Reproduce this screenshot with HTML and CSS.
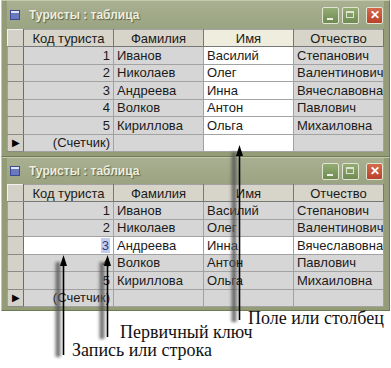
FILE: index.html
```html
<!DOCTYPE html>
<html lang="ru">
<head>
    <meta charset="UTF-8">
    <title>Туристы : таблица</title>
    <link rel="stylesheet" href="styles.css">
</head>
<body>
<div class="page">
    <div class="win win-top">
        <div class="titlebar">
            <span class="ticon"></span>
            <span class="ttext">Туристы : таблица</span>
            <span class="btns">
                <span class="btn btn-min"></span>
                <span class="btn btn-max"></span>
                <span class="btn btn-close">&#x2715;</span>
            </span>
        </div>
        <table class="grid sel-col">
            <tr><th class="rs"></th><th>Код туриста</th><th>Фамилия</th><th class="hl">Имя</th><th>Отчество</th></tr>
            <tr><td class="rs"></td><td class="num">1</td><td>Иванов</td><td class="w">Василий</td><td>Степанович</td></tr>
            <tr><td class="rs"></td><td class="num">2</td><td>Николаев</td><td class="w">Олег</td><td>Валентинович</td></tr>
            <tr><td class="rs"></td><td class="num">3</td><td>Андреева</td><td class="w">Инна</td><td>Вячеславовна</td></tr>
            <tr><td class="rs"></td><td class="num">4</td><td>Волков</td><td class="w">Антон</td><td>Павлович</td></tr>
            <tr><td class="rs"></td><td class="num">5</td><td>Кириллова</td><td class="w">Ольга</td><td>Михаиловна</td></tr>
            <tr><td class="rs cur">&#9654;</td><td class="num">(Счетчик)</td><td></td><td class="w"></td><td></td></tr>
        </table>
    </div>

    <div class="win win-bottom">
        <div class="titlebar">
            <span class="ticon"></span>
            <span class="ttext">Туристы : таблица</span>
            <span class="btns">
                <span class="btn btn-min"></span>
                <span class="btn btn-max"></span>
                <span class="btn btn-close">&#x2715;</span>
            </span>
        </div>
        <table class="grid">
            <tr><th class="rs"></th><th>Код туриста</th><th>Фамилия</th><th>Имя</th><th>Отчество</th></tr>
            <tr><td class="rs"></td><td class="num">1</td><td>Иванов</td><td>Василий</td><td>Степанович</td></tr>
            <tr><td class="rs"></td><td class="num">2</td><td>Николаев</td><td>Олег</td><td>Валентинович</td></tr>
            <tr class="sel-row"><td class="rs"></td><td class="num"><span class="mark">3</span></td><td>Андреева</td><td>Инна</td><td>Вячеславовна</td></tr>
            <tr><td class="rs"></td><td class="num">4</td><td>Волков</td><td>Антон</td><td>Павлович</td></tr>
            <tr><td class="rs"></td><td class="num">5</td><td>Кириллова</td><td>Ольга</td><td>Михаиловна</td></tr>
            <tr><td class="rs cur">&#9654;</td><td class="num">(Счетчик)</td><td></td><td></td><td></td></tr>
        </table>
    </div>

    <div class="notes">
        <div class="note note-1">Поле или столбец</div>
        <div class="note note-2">Первичный ключ</div>
        <div class="note note-3">Запись или строка</div>
    </div>

    <!-- стрелки поверх таблиц -->
    <svg class="arrows" width="391" height="368" viewBox="0 0 391 368">
        <defs>
            <filter id="blur" x="-2" y="-0.2" width="5" height="1.4">
                <feGaussianBlur stdDeviation="1.8"/>
            </filter>
        </defs>
        <g fill="#555" stroke="#555" filter="url(#blur)" opacity="0.8">
            <line x1="234" y1="152" x2="234" y2="322" stroke-width="5"/>
            <line x1="102" y1="262" x2="102" y2="339" stroke-width="5"/>
            <line x1="58" y1="262" x2="58" y2="357" stroke-width="5"/>
        </g>
        <g fill="#000" stroke="#000">
            <line x1="239.5" y1="152" x2="239.5" y2="320" stroke-width="1.6"/>
            <polygon points="239.5,145 236,156 243,156" stroke="none"/>
            <line x1="107.5" y1="262" x2="107.5" y2="337" stroke-width="1.6"/>
            <polygon points="107.5,255 104,266 111,266" stroke="none"/>
            <line x1="63.5" y1="262" x2="63.5" y2="355" stroke-width="1.6"/>
            <polygon points="63.5,255 60,266 67,266" stroke="none"/>
        </g>
    </svg>
</div>
</body>
</html>
```

FILE: styles.css
```css
body {
    margin: 0;
    background: #fff;
    font-family: "Liberation Sans", Arial, sans-serif;
}
.page {
    position: relative;
    width: 391px;
    height: 368px;
    overflow: hidden;
}
.win {
    margin-left: 1px;
    width: 389px;
    box-sizing: border-box;
    background: #939c76;
    border: 1px solid #6f7a56;
    border-top-color: #c3c9ad;
    border-left-color: #c3c9ad;
    padding: 0 5px 6px 5px;
}
.win-top {
    height: 157px;
}
.win-bottom {
    height: 154px;
}
.titlebar {
    height: 28px;
    display: flex;
    align-items: center;
    background: linear-gradient(#a9b091, #9aa382);
}
.win-bottom .titlebar {
    height: 26px;
}
.ticon {
    width: 8px;
    height: 8px;
    margin-left: 3px;
    background: #6a78c0;
    border: 1px solid #3b4a92;
    box-shadow: inset 0 2px 0 #dfe4f8;
}
.ttext {
    margin-left: 9px;
    font-size: 12px;
    font-weight: bold;
    color: #eceee0;
    text-shadow: 1px 1px 1px #5c6444;
}
.btns {
    margin-left: auto;
    display: flex;
    gap: 3px;
    margin-right: 1px;
}
.btn {
    width: 15px;
    height: 15px;
    border: 1px solid #e0e6d2;
    border-radius: 2px;
    background: linear-gradient(#93ad74, #6f8a52);
    position: relative;
    box-sizing: content-box;
}
.btn-min::after {
    content: "";
    position: absolute;
    left: 4px;
    bottom: 3px;
    width: 6px;
    height: 2px;
    background: #eef2e4;
}
.btn-max::after {
    content: "";
    position: absolute;
    left: 3px;
    top: 3px;
    width: 8px;
    height: 7px;
    border: 1px solid #dde5d0;
    border-top-width: 2px;
    box-sizing: border-box;
}
.btn-close {
    background: linear-gradient(#d6694c, #b9412c);
    color: #fff;
    font-size: 12px;
    font-weight: bold;
    line-height: 15px;
    text-align: center;
    margin-left: 4px;
}
.grid {
    border-collapse: collapse;
    table-layout: fixed;
    width: 377px;
    background: #d6d6d6;
    font-size: 13px;
    color: #1a1a1a;
    border: 1px solid #77775f;
}
.grid th, .grid td {
    width: 90px;
    height: 17.5px;
    padding: 0 3px;
    border: 1px solid #a2a2a2;
    white-space: nowrap;
    overflow: hidden;
    line-height: 15px;
    box-sizing: border-box;
    text-align: left;
}
.grid th {
    height: 17px;
    font-weight: normal;
    text-align: center;
    background: #d7d4ca;
    border-right: 1px solid #777;
    border-bottom: 1px solid #777;
    border-left-color: #f2f2f2;
}
.grid th.hl {
    background: #efeddd;
}
.grid .rs {
    width: 16px;
    padding: 0;
    background: #d4d1c8;
    border-right: 1px solid #6d6d6d;
    border-top-color: #f0f0f0;
    border-bottom-color: #8a8a8a;
}
.grid .cur {
    font-size: 10px;
    text-align: center;
    color: #000;
}
.grid .num {
    text-align: right;
}
.grid td.w {
    background: #fff;
}
.sel-row td:not(.rs) {
    background: #fff;
}
.mark {
    background: #c4cdee;
    color: #2a3c8a;
    padding: 0 1px;
}
.notes {
    margin-top: -1px;
    font-family: "Liberation Serif", "Times New Roman", serif;
    font-size: 18px;
    color: #111;
}
.note {
    line-height: 16px;
    white-space: nowrap;
}
.note-1 {
    margin-left: 248px;
}
.note-2 {
    margin-left: 120px;
    margin-top: -2px;
}
.note-3 {
    margin-left: 72px;
    margin-top: 2px;
}
.arrows {
    position: absolute;
    left: 0;
    top: 0;
    pointer-events: none;
}
```
